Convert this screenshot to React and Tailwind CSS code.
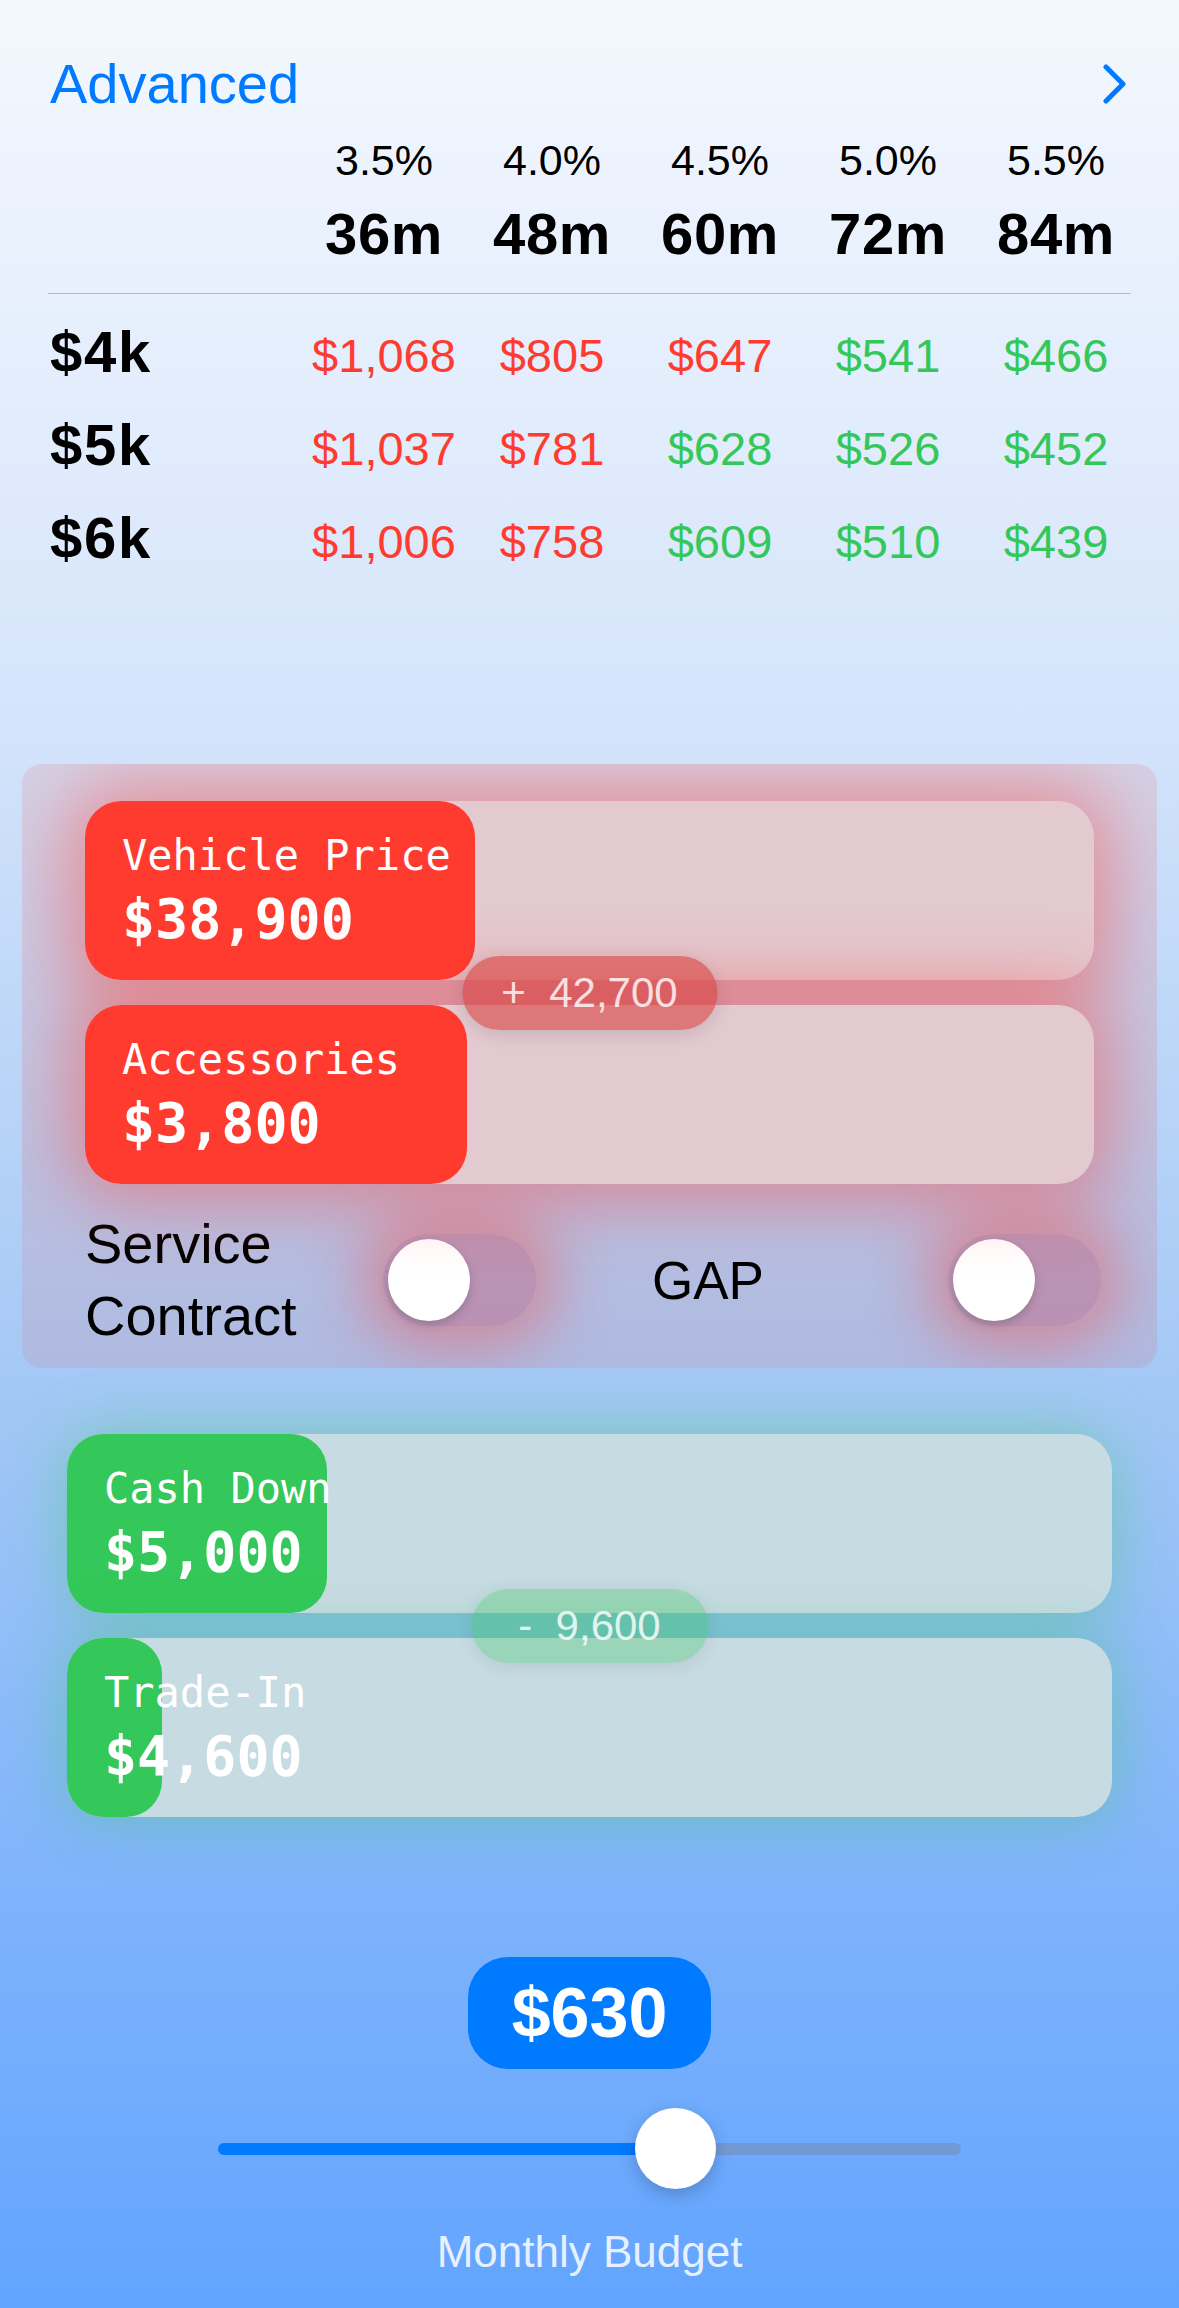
import { useState } from 'react'

const BUDGET = 630
const RATES = ['3.5%', '4.0%', '4.5%', '5.0%', '5.5%']
const TERMS = ['36m', '48m', '60m', '72m', '84m']
const ROWS = [
  { label: '$4k', vals: [1068, 805, 647, 541, 466] },
  { label: '$5k', vals: [1037, 781, 628, 526, 452] },
  { label: '$6k', vals: [1006, 758, 609, 510, 439] },
]

function ValueBar({ label, value, fill, fillClass, trackClass }) {
  return (
    <div className={`relative h-[179px] rounded-[36px] ${trackClass}`}>
      <div className={`absolute inset-y-0 left-0 rounded-[36px] ${fillClass}`} style={{ width: fill }} />
      <div className="relative pl-[37px] pt-[34px] font-['DejaVu_Sans_Mono',monospace] text-white">
        <div className="text-[42px] leading-none whitespace-pre">{label}</div>
        <div className="mt-[15px] text-[55px] font-bold leading-none">{value}</div>
      </div>
    </div>
  )
}

function Toggle({ onClick }) {
  return (
    <button
      onClick={onClick}
      className="flex h-[92px] w-[153px] items-center rounded-full bg-[#c4607c]/45 pl-[5px] shadow-[0_0_60px_22px_rgba(255,59,48,0.38)]"
    >
      <span className="h-[82px] w-[82px] rounded-full bg-white shadow-[0_4px_10px_rgba(0,0,0,0.18)]" />
    </button>
  )
}

export default function App() {
  const [service, setService] = useState(false)
  const [gap, setGap] = useState(false)

  return (
    <div className="min-h-[2308px] w-full overflow-hidden bg-[linear-gradient(180deg,#f4f8fe_0%,#d6e5fb_30%,#a4c8f5_60%,#82b5fb_80%,#62a4ff_100%)] font-['Liberation_Sans',Arial,sans-serif] text-black">
      {/* header + table */}
      <div className="px-[48px] pt-[56px]">
        <div className="flex items-center justify-between">
          <span className="pl-[2px] text-[56px] leading-none text-[#007aff]">Advanced</span>
          <svg width="24" height="40" viewBox="0 0 24 40" className="mr-[4px]">
            <polyline points="3,3 20,20 3,37" fill="none" stroke="#007aff" strokeWidth="5" strokeLinecap="round" strokeLinejoin="round" />
          </svg>
        </div>

        <div className="mt-[27px] grid grid-cols-[252px_repeat(5,168px)]">
          <span />
          {RATES.map(r => (
            <span key={r} className="text-center text-[43px] leading-none">{r}</span>
          ))}
        </div>
        <div className="mt-[23px] grid grid-cols-[252px_repeat(5,168px)]">
          <span />
          {TERMS.map(t => (
            <span key={t} className="text-center text-[58px] font-bold leading-none tracking-[0.01em]">{t}</span>
          ))}
        </div>

        <div className="mt-[30px] h-px bg-[#b3bccb]" />

        <div className="mt-[29px] flex flex-col gap-[35px]">
          {ROWS.map(row => (
            <div key={row.label} className="grid grid-cols-[252px_repeat(5,168px)] items-baseline">
              <span className="pl-[2px] text-[58px] font-bold leading-none tracking-[0.03em]">{row.label}</span>
              {row.vals.map(v => (
                <span
                  key={v}
                  className={`text-center text-[47px] leading-none ${v > BUDGET ? 'text-[#ff3b30]' : 'text-[#34c759]'}`}
                >
                  ${v.toLocaleString('en-US')}
                </span>
              ))}
            </div>
          ))}
        </div>
      </div>

      {/* costs */}
      <div className="mx-[22px] mt-[197px] overflow-hidden rounded-[20px] bg-[#ff3b30]/[0.1] px-[63px] pb-[16px] pt-[37px]">
        <div className="relative flex flex-col gap-[25px]">
          <ValueBar
            label="Vehicle Price"
            value="$38,900"
            fill={390}
            fillClass="bg-[#ff3b30]"
            trackClass="bg-[#e3c9d0] shadow-[0_0_70px_18px_rgba(255,59,48,0.42)]"
          />
          <ValueBar
            label="Accessories"
            value="$3,800"
            fill={382}
            fillClass="bg-[#ff3b30]"
            trackClass="bg-[#e3c9d0] shadow-[0_0_70px_18px_rgba(255,59,48,0.42)]"
          />
          <div className="absolute left-1/2 top-[155px] flex h-[74px] w-[255px] -translate-x-1/2 items-center justify-center rounded-full bg-[#d9413f]/60 text-[42px] leading-none whitespace-pre text-white/80 shadow-[0_4px_18px_rgba(0,0,0,0.12)]">
            {'+  42,700'}
          </div>
        </div>

        <div className="mt-[24px] flex items-center">
          <div className="flex w-[451px] shrink-0 items-center justify-between">
            <span className="text-[56px] leading-[72px]">Service<br />Contract</span>
            <Toggle onClick={() => setService(s => !s)} />
          </div>
          <div className="ml-[116px] flex w-[449px] shrink-0 items-center justify-between">
            <span className="text-[53px] leading-none">GAP</span>
            <Toggle onClick={() => setGap(s => !s)} />
          </div>
        </div>
      </div>

      {/* credits */}
      <div className="relative mx-[67px] mt-[66px] flex flex-col gap-[25px]">
        <ValueBar
          label="Cash Down"
          value="$5,000"
          fill={260}
          fillClass="bg-[#34c759]"
          trackClass="bg-[#c7dbe3] shadow-[0_0_60px_rgba(52,199,89,0.4)]"
        />
        <ValueBar
          label="Trade-In"
          value="$4,600"
          fill={95}
          fillClass="bg-[#34c759]"
          trackClass="bg-[#c7dbe3] shadow-[0_0_60px_rgba(52,199,89,0.4)]"
        />
        <div className="absolute left-1/2 top-[155px] flex h-[74px] w-[237px] -translate-x-1/2 items-center justify-center rounded-full bg-[#34c759]/30 text-[42px] leading-none whitespace-pre text-white/80 shadow-[0_4px_18px_rgba(0,0,0,0.08)]">
          {'-  9,600'}
        </div>
      </div>

      {/* budget */}
      <div className="mt-[140px] flex flex-col items-center">
        <div className="flex h-[112px] w-[243px] items-center justify-center rounded-[40px] bg-[#007aff] text-[70px] font-bold leading-none text-white">
          ${BUDGET}
        </div>
        <div className="relative mt-[39px] flex h-[81px] w-[743px] items-center">
          <div className="h-[12px] w-full rounded-full bg-[#7399d4]">
            <div className="h-full rounded-full bg-[#007aff]" style={{ width: 457 }} />
          </div>
          <div className="absolute left-[417px] top-0 h-[81px] w-[81px] rounded-full bg-white shadow-[0_6px_18px_rgba(0,0,0,0.2)]" />
        </div>
        <div className="mt-[41px] text-[44px] leading-none text-[#e6f0fe]">Monthly Budget</div>
      </div>
    </div>
  )
}
